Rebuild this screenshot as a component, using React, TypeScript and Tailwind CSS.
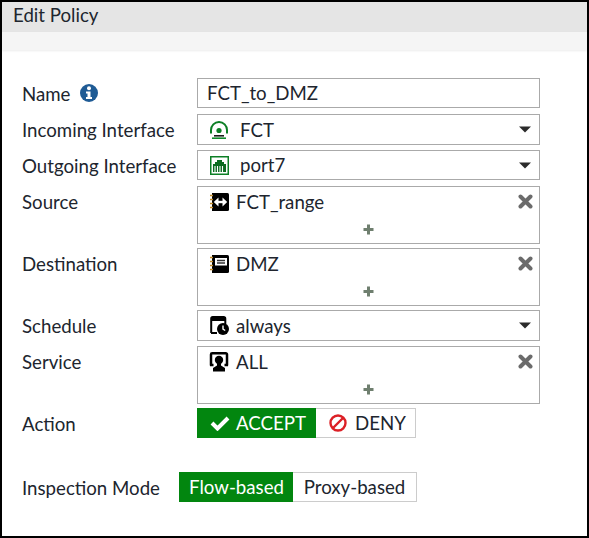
import React from "react";

const Caret = () => (
  <svg width="12" height="7" viewBox="0 0 12 7" className="absolute right-[8px] top-[11px]">
    <path d="M0 0.500H12L6 6.500Z" fill="#2b2b2b" />
  </svg>
);

const Remove = () => (
  <svg width="15" height="15" viewBox="0 0 15 15" className="absolute right-[6px] top-[7px]">
    <path d="M2.500 2.500L12.500 12.500M12.500 2.500L2.500 12.500" stroke="#6b6b6b" strokeWidth="4" strokeLinecap="round" />
  </svg>
);

const Plus = () => (
  <svg width="11" height="11" viewBox="0 0 11 11" className="absolute left-[165px] top-[37px]">
    <path d="M5.500 0.500V10.500M0.500 5.500H10.500" stroke="#6f7f6f" strokeWidth="3" />
  </svg>
);

const Wifi = () => (
  <svg width="20" height="20" viewBox="0 0 20 20">
    <path d="M2 13.500V10a8 8 0 0 1 16 0v3.500" fill="none" stroke="#0d7f26" strokeWidth="2" />
    <circle cx="10" cy="10.500" r="2.600" fill="#0d7f26" />
    <rect x="5" y="15" width="10" height="1.600" fill="#1c1c1c" />
    <rect x="3" y="17.400" width="14" height="1.600" fill="#0f8a2a" />
  </svg>
);

const Port = () => (
  <svg width="19" height="19" viewBox="0 0 19 19">
    <rect x="0.750" y="0.750" width="17.500" height="17.500" fill="#fff" stroke="#0d7f26" strokeWidth="1.500" />
    <path d="M3 8h2V6h2V4h5v2h2v2h2v8H3Z" fill="#0b6b20" />
    <path d="M5 10v6M7.500 10v6M10 10v6M12.500 10v6" stroke="#fff" strokeWidth="1.100" />
  </svg>
);

const Book = ({ children }: { children: React.ReactNode }) => (
  <svg width="19" height="18" viewBox="0 0 19 18">
    <path d="M2 0H17.500A1.500 1.500 0 0 1 19 1.500v15a1.500 1.500 0 0 1-1.500 1.500H2Z" fill="#000" />
    <path d="M0 2.500h3M0 6.500h3M0 10.500h3M0 14.500h3" stroke="#c08a2a" strokeWidth="1.600" />
    {children}
  </svg>
);

const Calendar = () => (
  <svg width="19" height="19" viewBox="0 0 19 19">
    <path d="M1.200 17V2.500A1.500 1.500 0 0 1 2.700 1h11.100A1.500 1.500 0 0 1 15.300 2.500V8" fill="none" stroke="#000" strokeWidth="2" />
    <path d="M1 1h15v4H1Z" fill="#000" />
    <path d="M1 17h6" stroke="#000" strokeWidth="2" />
    <circle cx="13" cy="13" r="6" fill="#000" />
    <path d="M13 9.500v3.700l2.200 1.300" fill="none" stroke="#fff" strokeWidth="1.400" />
  </svg>
);

const Monitor = () => (
  <svg width="20" height="20" viewBox="0 0 20 20">
    <path d="M2 13.500V2.500A1.200 1.200 0 0 1 3.200 1.300H16.800A1.200 1.200 0 0 1 18 2.500V13.500" fill="none" stroke="#000" strokeWidth="2.500" />
    <path d="M1 13h3.500M15.500 13H19" stroke="#000" strokeWidth="2.500" />
    <circle cx="10" cy="8" r="4.200" fill="#000" />
    <path d="M8 11h4v2.500l4 2.500V19.500H4V16l4-2.500Z" fill="#000" />
  </svg>
);

const Row = ({ label, extra, className, children }: { label: string; extra?: React.ReactNode; className: string; children: React.ReactNode }) => (
  <div className={`flex items-start ${className}`}>
    <div className="w-[175px] h-[30px] flex items-center gap-[10px] leading-[30px]">
      <span className="pt-[2px]">{label}</span>
      {extra}
    </div>
    {children}
  </div>
);

const Select = ({ icon, text, h, gap }: { icon: React.ReactNode; text: string; h: string; gap: string }) => (
  <div className={`relative w-[343px] ${h} border border-[#aaaaaa] [border-width:1.5px] flex items-center pl-[11px] ${gap} bg-white`}>
    <span className="flex w-[20px] h-[20px] items-center justify-center shrink-0">{icon}</span>
    <span>{text}</span>
    <Caret />
  </div>
);

const Multi = ({ icon, text }: { icon: React.ReactNode; text: string }) => (
  <div className="relative w-[343px] h-[58px] border border-[#aaaaaa] [border-width:1.5px] bg-white">
    <div className="flex items-center gap-[7px] pl-[11px] h-[29px]">
      <span className="flex w-[20px] h-[20px] items-center justify-center shrink-0">{icon}</span>
      <span>{text}</span>
    </div>
    <Remove />
    <Plus />
  </div>
);

export default function App() {
  return (
    <div className="w-[589px] h-[538px] overflow-hidden bg-black p-[2px] text-[18.67px] text-[#20252e] font-['Lato','sans-serif']">
      <div className="h-full bg-white">
        <div className="h-[30px] bg-[#e5e5e5] pl-[11px] leading-[27px]">Edit Policy</div>
        <div className="h-[18px] bg-[#f5f5f5] shadow-[0_1px_2px_rgba(0,0,0,0.08)]" />
        <div className="pl-[20px] pt-[28px]">
          <Row
            label="Name"
            className="h-[30px]"
            extra={
              <svg width="18" height="18" viewBox="0 0 18 18">
                <circle cx="9" cy="9" r="9" fill="#1f5b95" />
                <circle cx="9" cy="4.200" r="2" fill="#fff" />
                <path d="M6 7.500h4.500V13H12v2H6v-2h1.500V9.500H6Z" fill="#fff" />
              </svg>
            }
          >
            <div className="w-[343px] h-[30px] border border-[#aaaaaa] [border-width:1.5px] pl-[9px] flex items-center">FCT_to_DMZ</div>
          </Row>
          <Row label="Incoming Interface" className="mt-[6px]">
            <Select icon={<Wifi />} text="FCT" h="h-[31px]" gap="gap-[11px]" />
          </Row>
          <Row label="Outgoing Interface" className="mt-[5px]">
            <Select icon={<Port />} text="port7" h="h-[30px]" gap="gap-[11px]" />
          </Row>
          <Row label="Source" className="mt-[6px]">
            <Multi
              text="FCT_range"
              icon={
                <Book>
                  <path d="M6 9h9" stroke="#fff" strokeWidth="2.400" />
                  <path d="M8.500 4.500L3.800 9l4.700 4.500ZM12.500 4.500L17.200 9l-4.700 4.500Z" fill="#fff" />
                </Book>
              }
            />
          </Row>
          <Row label="Destination" className="mt-[4px]">
            <Multi
              text="DMZ"
              icon={
                <Book>
                  <path d="M5 3h12v7.500H5Z" fill="#fff" />
                  <path d="M7 5.500h8M7 8h8" stroke="#333" strokeWidth="1.300" />
                </Book>
              }
            />
          </Row>
          <Row label="Schedule" className="mt-[4px]">
            <Select icon={<Calendar />} text="always" h="h-[31px]" gap="gap-[7px]" />
          </Row>
          <Row label="Service" className="mt-[5px]">
            <Multi text="ALL" icon={<Monitor />} />
          </Row>
          <Row label="Action" className="mt-[4px]">
            <div className="flex h-[30px]">
              <div className="w-[119px] bg-[#02860f] text-white flex items-center pl-[13px] gap-[6px]">
                <svg width="20" height="16" viewBox="0 0 20 16">
                  <path d="M2 8l5.500 5.500L18 3" fill="none" stroke="#fff" strokeWidth="4" />
                </svg>
                <span>ACCEPT</span>
              </div>
              <div className="w-[100px] border border-[#cccccc] [border-width:1.5px] border-l-0 flex items-center pl-[13px] gap-[8px]">
                <svg width="18" height="18" viewBox="0 0 18 18">
                  <circle cx="9" cy="9" r="7.500" fill="none" stroke="#dc2026" strokeWidth="2.400" />
                  <path d="M4 14L14 4" stroke="#dc2026" strokeWidth="2.400" />
                </svg>
                <span>DENY</span>
              </div>
            </div>
          </Row>
          <div className="flex items-start mt-[34px]">
            <div className="w-[157px] h-[30px] flex items-center leading-[30px]">
              <span className="pt-[2px]">Inspection Mode</span>
            </div>
            <div className="flex h-[30px]">
              <div className="w-[114px] bg-[#02860f] text-white flex items-center justify-center pl-[1px]">Flow-based</div>
              <div className="w-[124px] border border-[#cccccc] [border-width:1.5px] border-l-0 flex items-center justify-center">Proxy-based</div>
            </div>
          </div>
        </div>
      </div>
    </div>
  );
}
